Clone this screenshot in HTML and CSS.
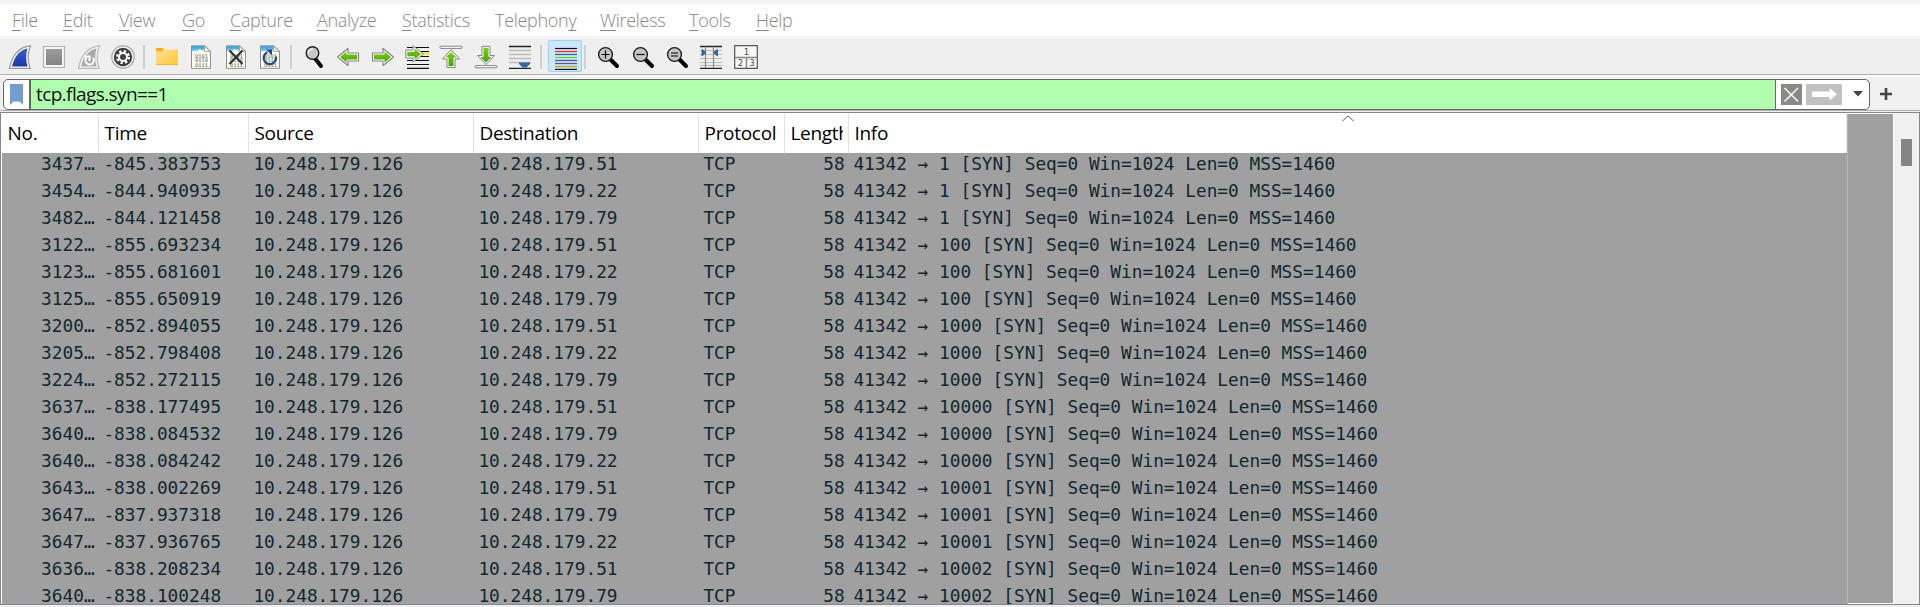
FILE: index.html
```html
<!DOCTYPE html>
<html lang="en">
<head>
<meta charset="utf-8">
<title>Packet list</title>
<link rel="stylesheet" href="styles.css">
</head>
<body>
<svg class="defs" width="0" height="0">
  <defs>
    <linearGradient id="blue" x1="0" y1="0" x2="0" y2="1"><stop offset="0" stop-color="#3a5fd0"/><stop offset="1" stop-color="#1c36ac"/></linearGradient>
    <linearGradient id="green" x1="0" y1="0" x2="0" y2="1"><stop offset="0" stop-color="#7fd01c"/><stop offset="1" stop-color="#48a008"/></linearGradient>
    <linearGradient id="gold" x1="0" y1="0" x2="1" y2="1"><stop offset="0" stop-color="#ffe190"/><stop offset="1" stop-color="#ffc83c"/></linearGradient>
    <linearGradient id="grey" x1="0" y1="0" x2="0" y2="1"><stop offset="0" stop-color="#9c9c9c"/><stop offset="1" stop-color="#828282"/></linearGradient>
    <linearGradient id="sky" x1="0" y1="0" x2="0" y2="1"><stop offset="0" stop-color="#1f97e0"/><stop offset="1" stop-color="#8fd0f6"/></linearGradient>
    <symbol id="doc" viewBox="0 0 24 24">
      <path d="M2.500.8H16l5.500 5.500V23.300H2.500z" fill="#fffff2" stroke="#8b8e86"/>
      <path d="M3 1.300H15.500V5.500H12.500C11.500 3.500 10 4 8.500 6H3z" fill="url(#sky)"/>
      <path d="M15.500 1v5.500H21z" fill="#f4f6ee" stroke="#8b8e86" stroke-width=".7"/>
      <g class="bits"><text x="6" y="12.800">0101</text><text x="6" y="17.300">0110</text><text x="6" y="21.800">0111</text></g>
    </symbol>
    <symbol id="lens" viewBox="0 0 24 24">
      <path d="M14.500 14.500L21 21" stroke="#000" stroke-width="4" stroke-linecap="round"/>
      <circle cx="9.500" cy="9.500" r="6.900" fill="#c4c4c4" stroke="#1b1b1b" stroke-width="1.400"/>
    </symbol>
    <symbol id="arrow" viewBox="0 0 24 24">
      <path d="M1.500 12L12 3.500V8H22.500V16H12V20.500z" fill="#fff" stroke="#858585" stroke-width="1.200" stroke-linejoin="round"/>
      <path d="M4 12L10.500 6.500V9.600H21V14.400H10.500V17.500z" fill="url(#green)"/>
    </symbol>
  </defs>
</svg>
<div class="window">
  <nav class="menu">
    <span class="m-file"><u>F</u>ile</span><span class="m-edit"><u>E</u>dit</span><span class="m-view"><u>V</u>iew</span><span class="m-go"><u>G</u>o</span><span class="m-capture"><u>C</u>apture</span><span class="m-analyze"><u>A</u>nalyze</span><span class="m-statistics"><u>S</u>tatistics</span><span class="m-telephony">Telephon<u>y</u></span><span class="m-wireless"><u>W</u>ireless</span><span class="m-tools"><u>T</u>ools</span><span class="m-help"><u>H</u>elp</span>
  </nav>
  <div class="toolbar">
    <div class="group">
      <svg viewBox="0 0 24 24"><path d="M1.500 23.300C4 10 11 2 22.500.8C19.500 8 19.500 16 22 23.300z" fill="#fff" stroke="#999" stroke-width="1.200"/><path d="M4 21.500C6.500 11.500 11.500 5 19.500 3.200C17.800 9 17.800 16 19.500 21.500z" fill="url(#blue)"/></svg>
      <svg viewBox="0 0 24 24"><path d="M1.500 1.500h21v21h-21z" fill="#f5f5f5" stroke="#b2b2b2" stroke-width="1.200"/><path d="M4 4h16v16H4z" fill="url(#grey)"/></svg>
      <svg viewBox="0 0 24 24"><path d="M1.500 23.300C4 10 11 2 22.500.8C19.500 8 19.500 16 22 23.300z" fill="#f8f8f8" stroke="#b8b8b8" stroke-width="1.200"/><path d="M4 21.500C6.500 11.500 11.500 5 19.500 3.200C17.800 9 17.800 16 19.500 21.500z" fill="#aaa"/><path d="M9.500 12.500a4.200 4.200 0 1 0 6.500.2M8 11.500h4.500v4.500" fill="none" stroke="#fff" stroke-width="2"/></svg>
      <svg viewBox="0 0 24 24"><circle cx="12" cy="12" r="11.200" fill="#fafafa" stroke="#a5a5a5" stroke-width="1.200"/><circle cx="12" cy="12" r="9.200" fill="#3f3f3f"/><circle cx="12" cy="12" r="5.800" fill="none" stroke="#fff" stroke-width="2.500" stroke-dasharray="2.300 2.255"/><circle cx="12" cy="12" r="5" fill="#fff"/><circle cx="12" cy="12" r="3" fill="#3f3f3f"/></svg>
    </div>
    <i class="sep sep-a"></i>
    <div class="group">
      <svg viewBox="0 0 24 24"><path d="M1 3h7.500v4H1z" fill="#f5b21a"/><path d="M1 6.500H7L9 4.500H23V20H1z" fill="url(#gold)"/><path d="M1 19.600H23" stroke="#efb52d"/></svg>
      <svg viewBox="0 0 24 24"><use href="#doc"/></svg>
      <svg viewBox="0 0 24 24"><use href="#doc"/><path d="M5.500 5.500L18.500 19M18.500 5.500L5.500 19" stroke="#2e3436" stroke-width="2.200"/></svg>
      <svg viewBox="0 0 24 24"><use href="#doc"/><path d="M17.900 11.500A6.200 6.200 0 1 1 9.500 7.200" fill="none" stroke="#204a87" stroke-width="2.200"/><path d="M8 4.500h6v6z" fill="#204a87"/></svg>
    </div>
    <i class="sep sep-b"></i>
    <div class="group">
      <svg viewBox="0 0 24 24"><path d="M13 13.500L19 21" stroke="#000" stroke-width="4" stroke-linecap="round"/><circle cx="10.500" cy="8" r="6.300" fill="#c9cbc9" stroke="#222" stroke-width="1.400"/><path d="M6.500 8a4 4 0 0 1 4-4" fill="none" stroke="#fff" stroke-width="1.200"/></svg>
      <svg viewBox="0 0 24 24"><use href="#arrow"/></svg>
      <svg viewBox="0 0 24 24"><use href="#arrow" transform="matrix(-1 0 0 1 24 0)"/></svg>
      <svg viewBox="0 0 24 24"><path d="M2 2.500H24M2 6.500H24M2 15.500H24M2 19.500H24M2 23.300H24" stroke="#111" stroke-width="1.200"/><path d="M15 7H24v3H15z" fill="#fce94f"/><path d="M2 11.500H24" stroke="#111"/><path d="M.8 5H8V.8L18.500 9L8 17V13H.8z" fill="#fff" stroke="#858585"/><path d="M2.300 6.700H9.500V3.500L16 9L9.500 14.300V11.300H2.300z" fill="url(#green)"/></svg>
      <svg viewBox="0 0 24 24"><path d="M2 1.200H22a1 1 0 0 1 0 2.200H2a1 1 0 0 1 0-2.200z" fill="#fff" stroke="#858585"/><path d="M12 4.800L20.500 14H16V22.500H8V14H3.500z" fill="#fff" stroke="#858585"/><path d="M12 7L17.500 12.500H14.500V21H9.500V12.500H6.500z" fill="url(#green)"/></svg>
      <svg viewBox="0 0 24 24"><path d="M2 20.600H22a1 1 0 0 1 0 2.200H2a1 1 0 0 1 0-2.200z" fill="#fff" stroke="#858585"/><path d="M12 19.500L20.500 10.500H16V1.300H8V10.500H3.500z" fill="#fff" stroke="#858585"/><path d="M12 17.500L17.500 12H14.500V2.800H9.500V12H6.500z" fill="url(#green)"/></svg>
      <svg viewBox="0 0 24 24"><path d="M1 1.500H23M1 23.300H23" stroke="#222" stroke-width="1.300"/><path d="M1 5.500H23M1 9.500H23M1 13.500H23M1 17.500H23" stroke="#babdb6" stroke-width="1.300"/><path d="M11 17.500H22V19L18.500 22.500H14.500L11 19z" fill="#3465a4"/></svg>
    </div>
    <i class="sep sep-c"></i>
    <div class="toggled"><svg viewBox="0 0 24 24"><path d="M1 2.500H23" stroke="#111" stroke-width="1.200"/><path d="M1 5.500H23" stroke="#ef2929" stroke-width="1.300"/><path d="M1 8.500H23" stroke="#3465a4" stroke-width="1.300"/><path d="M1 11.500H23" stroke="#73d216" stroke-width="1.300"/><path d="M1 14.500H23" stroke="#3465a4" stroke-width="1.300"/><path d="M1 17.500H23" stroke="#75507b" stroke-width="1.300"/><path d="M1 20.500H23" stroke="#c4a000" stroke-width="1.300"/><path d="M1 23.400H23" stroke="#111" stroke-width="1.200"/></svg></div>
    <i class="sep sep-d"></i>
    <div class="group">
      <svg viewBox="0 0 24 24"><use href="#lens"/><path d="M5.500 9.500h8M9.500 5.500v8" stroke="#000" stroke-width="1.200"/></svg>
      <svg viewBox="0 0 24 24"><use href="#lens"/><path d="M5.500 9.500h8" stroke="#000" stroke-width="1.200"/></svg>
      <svg viewBox="0 0 24 24"><use href="#lens"/><path d="M6 8h7M6 11h7" stroke="#000" stroke-width="1.200"/></svg>
      <svg viewBox="0 0 24 24"><path d="M1 5.500H23M1 9.500H23M1 13.500H23M1 17.500H23M1 20.500H23" stroke="#babdb6" stroke-width="1.200"/><path d="M1 1.500H23M1 23.400H23" stroke="#222" stroke-width="1.300"/><path d="M6.500 1.500V23M14.500 1.500V23" stroke="#888a85" stroke-width="1.200"/><path d="M3 4.500L7 7.500L3 11zM18.500 4.500L14.500 7.500L18.500 11z" fill="#3465a4" stroke="#3465a4"/></svg>
      <svg viewBox="0 0 24 24"><path d="M.7.7H23.300V23.300H.7z" fill="#f7f7f6" stroke="#555753" stroke-width="1.200"/><path d="M1 12.500H23M12.500 12.500V23" stroke="#888a85" stroke-width="1.500"/><g class="panes"><text x="12.500" y="9.500">1</text><text x="6.500" y="20.800">2</text><text x="18" y="20.800">3</text></g></svg>
    </div>
  </div>
  <div class="filterbar">
    <div class="field">
      <div class="bookmark"><svg width="13" height="21" viewBox="0 0 13 21"><path d="M0 0H13V21L9.500 17.500H3.500L0 21z" fill="#729fcf"/></svg></div>
      <div class="expression">tcp.flags.syn==1</div>
      <div class="actions">
        <svg width="21" height="21" viewBox="0 0 21 21"><path d="M0 0H21V21H0z" fill="#888a85"/><path d="M3.500 4L17 17.500M17 4L3.500 17.500" stroke="#f4f4f4" stroke-width="1.700"/></svg>
        <svg width="36" height="21" viewBox="0 0 36 21"><rect width="36" height="21" rx="1.500" fill="#c1c1c1"/><path d="M6 7.500H23.500V4L31 10.300L23.500 16.500V13H6z" fill="#fff"/></svg>
        <svg class="drop" width="10" height="6" viewBox="0 0 10 6"><path d="M0 0H10L5 5.500z" fill="#444"/></svg>
      </div>
    </div>
    <svg width="12" height="12" viewBox="0 0 12 12"><path d="M6 0V12M0 6H12" stroke="#444" stroke-width="2.600"/></svg>
  </div>
  <div class="list">
    <div class="table">
      <div class="head"><span>No.</span><span>Time</span><span>Source</span><span>Destination</span><span>Protocol</span><span><b>Length</b></span><span>Info</span>
        <svg class="sort" width="12" height="7" viewBox="0 0 12 7"><path d="M.5 6L6 .8L11.500 6" fill="none" stroke="#555"/></svg>
      </div>
      <div class="rows" id="rows"></div>
    </div>
    <div class="minimap"></div>
    <div class="scroll"><div class="thumb"></div></div>
  </div>
</div>
<script src="rows.js"></script>
</body>
</html>
```
FILE: styles.css
```css
body { margin: 0; background: #f0f0f0; overflow: hidden; }
.defs { position: absolute; }
.window { width: 1920px; height: 607px; display: flex; flex-direction: column; font-family: "Open Sans", sans-serif; }
.menu { height: 32px; border-top: 4px solid #f2f2f2; border-bottom: 1px solid #ececec; background: #fff; display: flex; padding-left: 12px; font-size: 18px; line-height: 33px; color: #888; white-space: nowrap; font-weight: 300; }
.menu span { flex: none; letter-spacing: -0.3px; }
.menu u { text-underline-offset: 3px; text-decoration-thickness: 1px; text-decoration-skip-ink: none; }
.m-file { width: 51px; } .m-edit { width: 56px; } .m-view { width: 63px; } .m-go { width: 48px; }
.m-capture { width: 87px; } .m-analyze { width: 85px; } .m-statistics { width: 93px; } .m-telephony { width: 105px; }
.m-wireless { width: 89px; } .m-tools { width: 67px; }
.toolbar { height: 36px; border-top: 1px solid #fff; border-bottom: 1px solid #b0b0b0; background: #efefef; display: flex; align-items: center; padding-left: 8px; }
.group { display: flex; gap: 10.33px; }
.toolbar svg { width: 24px; height: 24px; display: block; flex: none; margin-top: 2px; }
.sep { width: 2px; height: 24px; background: #d0d0d0; margin-top: 1px; }
.sep-a { margin-left: 8px; margin-right: 10px; }
.sep-b { margin-left: 8px; margin-right: 10px; }
.sep-c { margin-left: 8px; margin-right: 6px; }
.sep-d { margin-left: 2px; margin-right: 10.5px; }
.toggled { width: 32px; height: 30px; border: 1px solid #99d1ff; border-radius: 2px; background: #cce8ff; display: flex; justify-content: center; }
.toolbar .toggled svg { margin-top: 5px; margin-left: 2px; }
.bits { font: 700 5.4px "Liberation Mono", monospace; fill: #8d8f87; }
.panes { font: 8px "DejaVu Sans", sans-serif; fill: #444; text-anchor: middle; }
.filterbar { height: 36px; flex: none; border-top: 2px solid #f7f7f7; display: flex; align-items: center; gap: 10px; padding-left: 3px; border-bottom: 1px solid #b0b0b0; box-sizing: border-box; }
.field { width: 1867px; height: 31px; box-sizing: border-box; border: 1.5px solid #666; border-radius: 5px; background: #fff; display: flex; overflow: hidden; margin-top: 1px; }
.bookmark { width: 25px; display: flex; justify-content: center; align-items: center; border-right: 2px solid #666; }
.expression { flex: 1; background: #afffaf; border-right: 1px solid #666; padding-left: 5px; font-size: 19px; line-height: 28px; letter-spacing: -0.6px; color: #111; }
.actions { width: 93px; display: flex; align-items: center; padding-left: 5px; box-sizing: border-box; gap: 4px; }
.actions svg { flex: none; }
.actions .drop { margin-left: 7px; }
.list { height: 491px; flex: none; margin-top: 1px; border: 1px solid #828790; width: 1918px; display: flex; background: #fff; }
.table { width: 1845px; margin: 1px 0 0 1px; display: flex; flex-direction: column; overflow: hidden; border-right: 1px solid #b8b8b8; background: #a0a0a0; }
.head, .row { display: grid; grid-template-columns: 97px 150px 225px 225px 86px 64px 998px; }
.head { position: relative; height: 39px; flex: none; background: #fff; font-size: 19px; line-height: 39px; letter-spacing: -0.3px; color: #000; }
.head span { padding-left: 5.5px; border-right: 1px solid #e2e2e2; white-space: nowrap; }
.head b { display: block; font-weight: 400; width: 52px; overflow: hidden; }
.sort { position: absolute; left: 1340px; top: 1px; }
.rows { height: 451px; overflow: hidden; }
.row { height: 27px; line-height: 27px; font-family: "DejaVu Sans Mono", monospace; font-size: 17.8px; color: #12272e; white-space: pre; }
.row:first-child { margin-top: -3px; }
.row span { padding-left: 4.4px; }
.row .right { text-align: right; padding-right: 4.4px; }
.minimap { width: 45px; margin-top: 1px; margin-bottom: 1px; background: #a0a0a0; }
.scroll { flex: 1; margin-left: 1px; background: #f0f0f0; }
.thumb { width: 11px; height: 27px; margin: 26px 0 0 7px; background: #858585; }
```
FILE: rows.js
```js
const packets = [
  ["3437", "845.383753", 51, 1], ["3454", "844.940935", 22, 1], ["3482", "844.121458", 79, 1],
  ["3122", "855.693234", 51, 100], ["3123", "855.681601", 22, 100], ["3125", "855.650919", 79, 100],
  ["3200", "852.894055", 51, 1000], ["3205", "852.798408", 22, 1000], ["3224", "852.272115", 79, 1000],
  ["3637", "838.177495", 51, 10000], ["3640", "838.084532", 79, 10000], ["3640", "838.084242", 22, 10000],
  ["3643", "838.002269", 51, 10001], ["3647", "837.937318", 79, 10001], ["3647", "837.936765", 22, 10001],
  ["3636", "838.208234", 51, 10002], ["3640", "838.100248", 79, 10002]
];
document.getElementById("rows").innerHTML = packets.map(([no, time, host, port]) =>
  `<div class="row"><span class="right">${no}…</span><span>-${time}</span><span>10.248.179.126</span><span>10.248.179.${host}</span><span>TCP</span><span class="right">58</span><span>41342 → ${port} [SYN] Seq=0 Win=1024 Len=0 MSS=1460</span></div>`).join("");
```
